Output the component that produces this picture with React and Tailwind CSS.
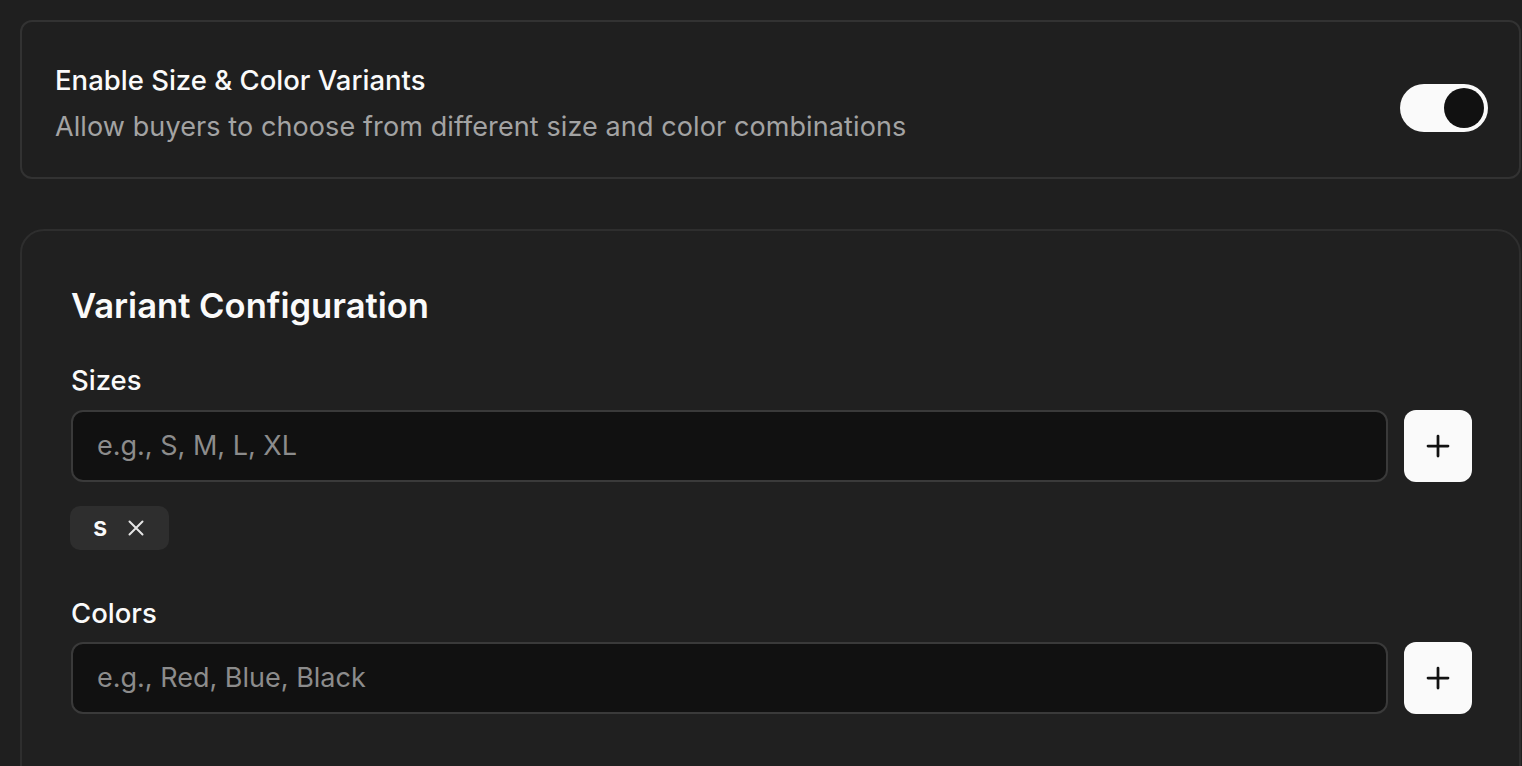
import React from "react";

function Plus() {
  return (
    <svg width="30" height="30" viewBox="0 0 24 24" fill="none" stroke="#111111" strokeWidth="2.2" strokeLinecap="round">
      <path d="M12 4v16M4 12h16" />
    </svg>
  );
}

function XIcon() {
  return (
    <svg width="16" height="16" viewBox="0 0 16 16" fill="none" stroke="#e5e5e5" strokeWidth="2" strokeLinecap="round">
      <path d="M1.5 1.5l13 13M14.5 1.5l-13 13" />
    </svg>
  );
}

function Field({ placeholder }) {
  return (
    <div className="flex gap-[16px] items-center">
      <div className="flex-1 h-[72px] rounded-[12px] border-2 border-[#3a3a3a] bg-[#111111] flex items-center pl-[24px]">
        <span className="text-[27px] text-[#8c8c8c]">{placeholder}</span>
      </div>
      <button className="w-[68px] h-[72px] rounded-[12px] bg-[#fafafa] flex items-center justify-center">
        <Plus />
      </button>
    </div>
  );
}

export default function App() {
  return (
    <div
      className="w-[1522px] h-[766px] overflow-hidden bg-[#1f1f1f] pl-[20px] pr-[1px] pt-[20px]"
      style={{ fontFamily: "Inter, 'Noto Sans', sans-serif" }}
    >
      <div className="h-[159px] rounded-[12px] border-2 border-[#323232] bg-[#1f1f1f] flex items-start justify-between pl-[33px] pr-[31px] pt-[38px]">
        <div>
          <div className="text-[27.5px] leading-[40px] font-medium text-[#fafafa]">Enable Size &amp; Color Variants</div>
          <div className="mt-[7px] text-[27px] leading-[40px] tracking-[0.1px] text-[#a3a3a3]">
            Allow buyers to choose from different size and color combinations
          </div>
        </div>
        <div className="mt-[24px] w-[88px] h-[48px] rounded-full bg-[#fafafa] flex items-center justify-end pr-[4px]">
          <div className="w-[40px] h-[40px] rounded-full bg-[#111111]" />
        </div>
      </div>

      <div className="mt-[50px] h-[600px] rounded-[24px] border-2 border-[#2e2e2e] bg-[#202020] pl-[49px] pr-[47px] pt-[54px]">
        <div className="text-[34.6px] leading-[40px] font-semibold text-[#fafafa]">Variant Configuration</div>
        <div className="mt-[35px] text-[27.5px] leading-[40px] font-medium text-[#fafafa]">Sizes</div>
        <div className="mt-[10px]">
          <Field placeholder="e.g., S, M, L, XL" />
        </div>
        <div className="mt-[24px] flex">
          <div className="h-[44px] rounded-[10px] bg-[#2e2e2e] flex items-center pl-[23px] pr-[25px] gap-[21px] -ml-[1px]">
            <span className="text-[26px] leading-none font-semibold text-[#fafafa] -mt-[3px]">s</span>
            <XIcon />
          </div>
        </div>
        <div className="mt-[43px] text-[27.5px] leading-[40px] font-medium text-[#fafafa]">Colors</div>
        <div className="mt-[9px]">
          <Field placeholder="e.g., Red, Blue, Black" />
        </div>
      </div>
    </div>
  );
}
